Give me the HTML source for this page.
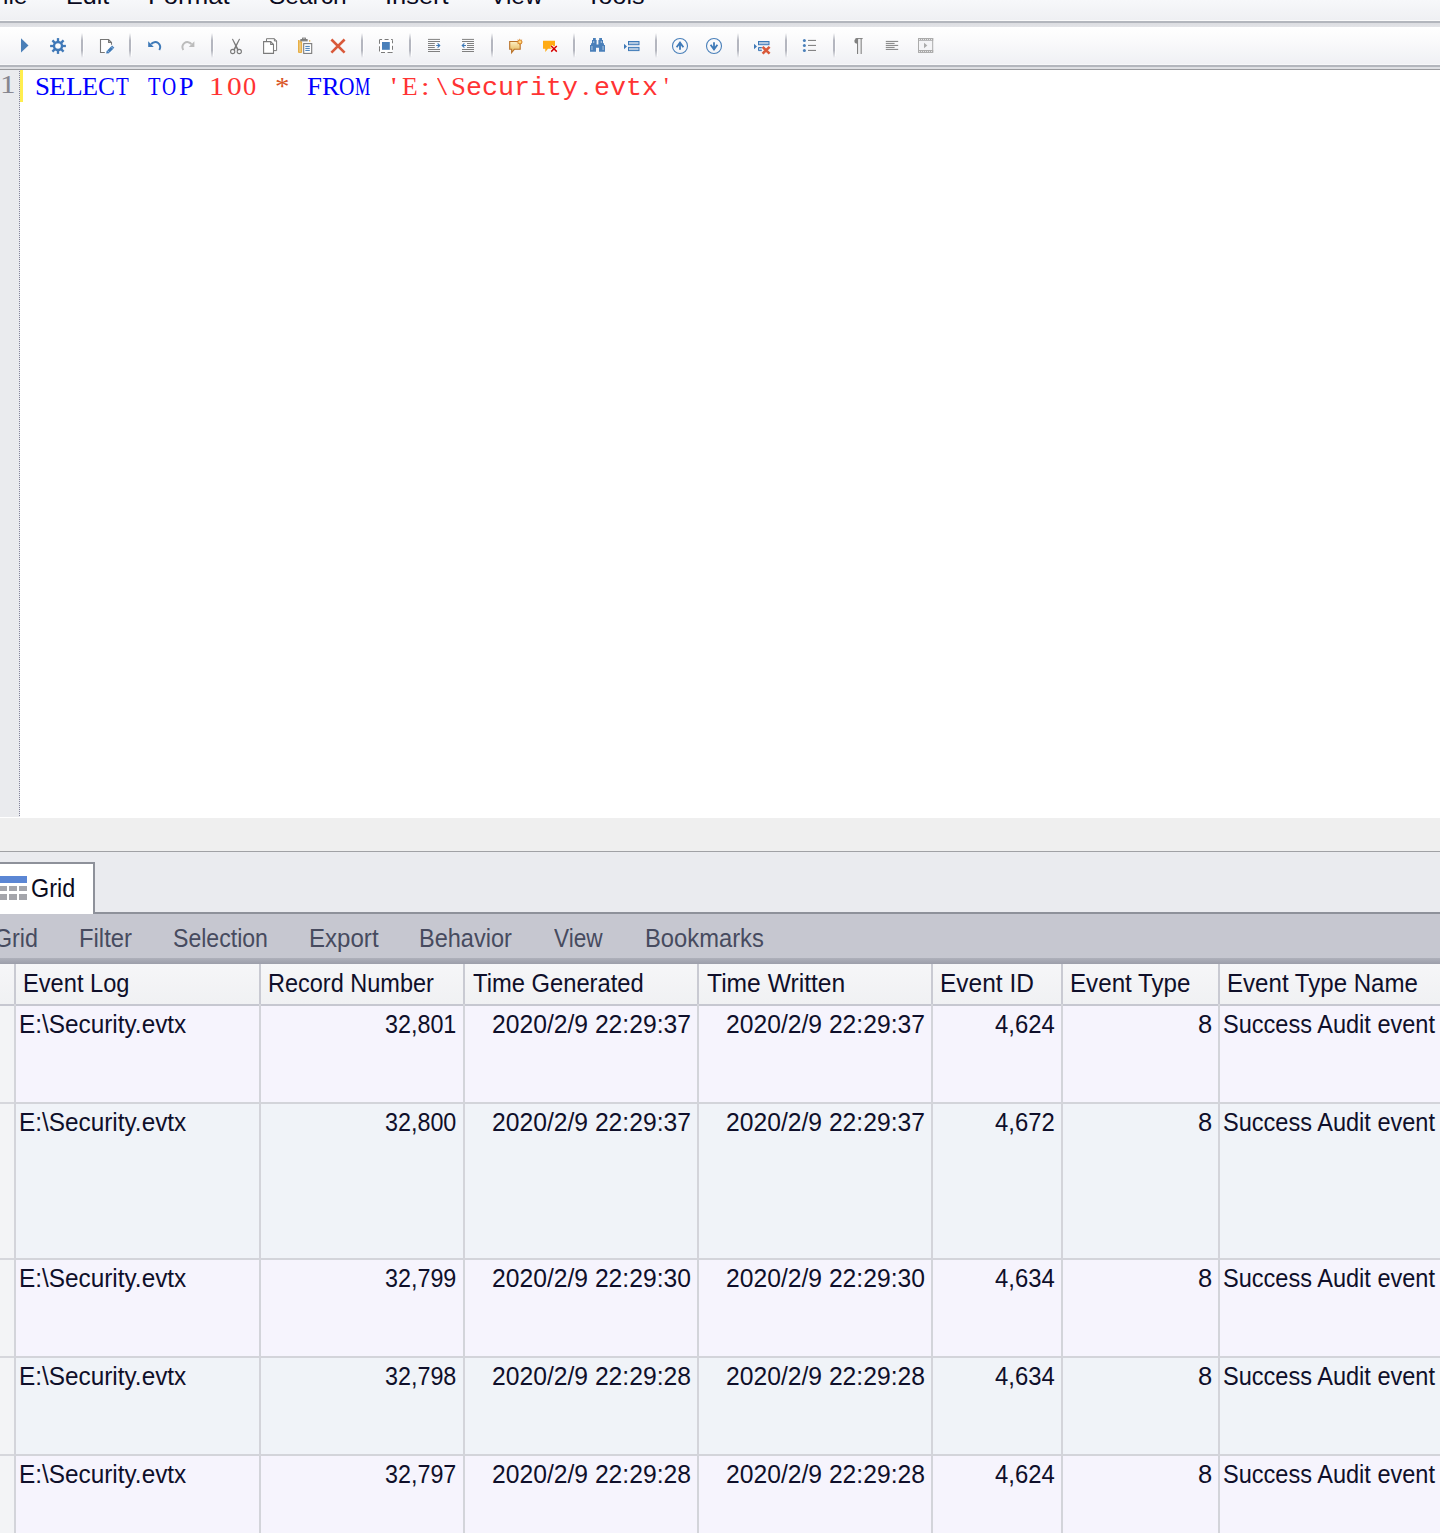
<!DOCTYPE html>
<html><head><meta charset="utf-8"><style>
*{margin:0;padding:0;box-sizing:border-box}
html,body{width:1440px;height:1533px;overflow:hidden;background:#fff}
body{position:relative;font-family:"Liberation Sans",sans-serif;color:#000}
.a{position:absolute}
.t{position:absolute;white-space:pre;line-height:1;transform-origin:0 0;font-size:24.5px}
.mi{color:#0a0a1e}
.code{font-family:"Liberation Mono",monospace;font-size:26.6667px}
.cs{font-family:"Liberation Serif",serif;font-size:24.5px}
.hd{color:#0f0f2a}
.cell{color:#0f0f2a}
.gm{color:#474b5f;font-size:24px}
.vl{position:absolute;width:2px}
.hl{position:absolute;left:16px;width:1424px;height:2px;background:#d3d4da}
</style></head><body>
<div class="a" style="left:0;top:0;width:1440px;height:20px;background:linear-gradient(#f7f8fa,#eff0f3)"></div>
<div class="a" style="left:0;top:20px;width:1440px;height:1px;background:#fafafb"></div>
<div class="a" style="left:0;top:21px;width:1440px;height:2px;background:#b3b6bd"></div>
<div class="a" style="left:0;top:23px;width:1440px;height:4px;background:linear-gradient(#dcdde1,#e3e4e8)"></div>
<span class="t mi" style="left:-12.00px;top:-16.5px;transform:scale(1.0,1.0);">File</span>
<span class="t mi" style="left:65.95px;top:-16.5px;transform:scale(1.025,1.0);">Edit</span>
<span class="t mi" style="left:147.89px;top:-16.5px;transform:scale(1.053,1.0);">Format</span>
<span class="t mi" style="left:269.00px;top:-16.5px;transform:scale(1.0,1.0);">Search</span>
<span class="t mi" style="left:384.62px;top:-16.5px;transform:scale(1.039,1.0);">Insert</span>
<span class="t mi" style="left:490.00px;top:-16.5px;transform:scale(1.0,1.0);">View</span>
<span class="t mi" style="left:585.68px;top:-16.5px;transform:scale(1.024,1.0);">Tools</span>
<div class="a" style="left:0;top:27px;width:1440px;height:38px;background:linear-gradient(#ffffff,#fbfbfc 30%,#eff0f4)"></div>
<div class="a" style="left:0;top:64px;width:1440px;height:1px;background:#f7f7f9"></div>
<div class="a" style="left:0;top:65px;width:1440px;height:2px;background:#b3b6bd"></div>
<div class="a" style="left:0;top:67px;width:1440px;height:2px;background:#dedfe3"></div>
<div class="a" style="left:0;top:69px;width:1440px;height:1px;background:#9a9b9f"></div>
<svg class="a" style="left:0;top:0" width="960" height="70">
<!-- separators -->
<defs><linearGradient id="sg" x1="0" y1="0" x2="0" y2="1"><stop offset="0" stop-color="#b4b6bf" stop-opacity="0"/><stop offset=".3" stop-color="#b4b6bf"/><stop offset=".7" stop-color="#b4b6bf"/><stop offset="1" stop-color="#b4b6bf" stop-opacity="0"/></linearGradient></defs>
<rect x="81" y="33" width="2" height="25" fill="url(#sg)"/><rect x="83" y="35" width="1" height="21" fill="#fff" opacity=".7"/>
<rect x="129" y="33" width="2" height="25" fill="url(#sg)"/><rect x="131" y="35" width="1" height="21" fill="#fff" opacity=".7"/>
<rect x="211" y="33" width="2" height="25" fill="url(#sg)"/><rect x="213" y="35" width="1" height="21" fill="#fff" opacity=".7"/>
<rect x="361" y="33" width="2" height="25" fill="url(#sg)"/><rect x="363" y="35" width="1" height="21" fill="#fff" opacity=".7"/>
<rect x="409" y="33" width="2" height="25" fill="url(#sg)"/><rect x="411" y="35" width="1" height="21" fill="#fff" opacity=".7"/>
<rect x="491" y="33" width="2" height="25" fill="url(#sg)"/><rect x="493" y="35" width="1" height="21" fill="#fff" opacity=".7"/>
<rect x="573" y="33" width="2" height="25" fill="url(#sg)"/><rect x="575" y="35" width="1" height="21" fill="#fff" opacity=".7"/>
<rect x="655" y="33" width="2" height="25" fill="url(#sg)"/><rect x="657" y="35" width="1" height="21" fill="#fff" opacity=".7"/>
<rect x="737" y="33" width="2" height="25" fill="url(#sg)"/><rect x="739" y="35" width="1" height="21" fill="#fff" opacity=".7"/>
<rect x="785" y="33" width="2" height="25" fill="url(#sg)"/><rect x="787" y="35" width="1" height="21" fill="#fff" opacity=".7"/>
<rect x="833" y="33" width="2" height="25" fill="url(#sg)"/><rect x="835" y="35" width="1" height="21" fill="#fff" opacity=".7"/>
<!-- play -->
<path d="M21 38.3 L21 52.5 L28.5 45.4 Z" fill="#4a7fb8"/>
<!-- gear -->
<g transform="translate(58 46)" fill="#4079b8">
<circle r="5.2"/>
<rect x="-1.15" y="-7.9" width="2.3" height="15.8"/>
<rect x="-1.15" y="-7.9" width="2.3" height="15.8" transform="rotate(45)"/>
<rect x="-1.15" y="-7.9" width="2.3" height="15.8" transform="rotate(90)"/>
<rect x="-1.15" y="-7.9" width="2.3" height="15.8" transform="rotate(135)"/>
<circle r="2.8" fill="#fbfbfd"/>
</g>
<!-- doc + pencil -->
<path d="M100.5 39.5 H108.6 L111.5 42.4 V52.5 H100.5 Z" fill="#fff"/>
<path d="M104.8 52.5 H100.5 V39.5 H108.6 L111.5 42.4 V44.8 M108.6 39.5 V42.4 H111.5" fill="none" stroke="#767676" stroke-width="1.1"/>
<path d="M106.2 53.6 L106.63 50.91 L112.07 45.47 L114.33 47.73 L108.89 53.17 Z" fill="#3f7ab8"/>
<path d="M107.19 50.35 L109.45 52.61 M111.01 46.53 L113.27 48.79" stroke="#fff" stroke-width="0.7" opacity=".75"/>
<!-- undo -->
<path d="M148.2 41.2 L148.2 46.9 L153.8 46.9 Z" fill="#3f7ab8"/>
<path d="M151.2 44.2 A4.6 4.6 0 1 1 159.3 50" fill="none" stroke="#3f7ab8" stroke-width="2"/>
<!-- redo -->
<g transform="translate(342.6 0) scale(-1 1)">
<path d="M148.2 41.2 L148.2 46.9 L153.8 46.9 Z" fill="#bcbcbc"/>
<path d="M151.2 44.2 A4.6 4.6 0 1 1 159.3 50" fill="none" stroke="#bcbcbc" stroke-width="2"/>
</g>
<!-- scissors -->
<g fill="#7a7a7a">
<path d="M231.9 38.9 L232.9 38.8 L238.9 49.8 L237.3 50.4 Z"/>
<path d="M240.1 38.9 L239.1 38.8 L233.1 49.8 L234.7 50.4 Z"/>
</g>
<g fill="none" stroke="#7a7a7a" stroke-width="1.1">
<circle cx="232.7" cy="51.5" r="2.1"/>
<circle cx="239.3" cy="51.5" r="2.1"/>
</g>
<!-- copy -->
<path d="M266.5 38.7 H274.4 L276.6 41 V50.6 H266.5 Z" fill="#fff" stroke="#7b7b7b" stroke-width="1"/>
<path d="M274.4 38.7 V41 H276.6" fill="none" stroke="#7b7b7b" stroke-width="1"/>
<path d="M263.6 41.6 H270.7 L273.5 44.4 V53.4 H263.6 Z" fill="#fff" stroke="#7b7b7b" stroke-width="1.1"/>
<path d="M270.7 41.6 V44.4 H273.5" fill="none" stroke="#7b7b7b" stroke-width="1.1"/>
<!-- paste -->
<rect x="298.4" y="40.2" width="3.3" height="12.3" fill="#ebc77c"/>
<path d="M298.6 40 V52.4 H301.6 V42 H299.6" fill="none" stroke="#e7a93a" stroke-width="1"/>
<rect x="309.2" y="40" width="1" height="1.8" fill="#e7a93a"/>
<rect x="300.9" y="39.6" width="6.2" height="1.2" fill="none" stroke="#7a7a7a" stroke-width="1.1"/><rect x="302.6" y="38.1" width="2.8" height="1.6" fill="none" stroke="#7a7a7a" stroke-width="1"/>
<rect x="303.7" y="43.6" width="8" height="9.8" fill="#fff" stroke="#7b7b7b" stroke-width="1.1"/>
<g stroke="#3f7ab8" stroke-width="1"><path d="M305.3 46.4 H309.8 M305.3 48.4 H309.8 M305.3 50.4 H309.8"/></g>
<!-- big X -->
<path d="M331.4 39.5 L344.6 52.6 M344.6 39.5 L331.4 52.6" stroke="#d9593a" stroke-width="2.6"/>
<!-- select all -->
<rect x="379.5" y="39.5" width="13" height="13" fill="#fff" stroke="#7a7a7a" stroke-width="1" stroke-dasharray="2.6 2.5 4 2.5 2.6 0" />
<rect x="382" y="42" width="7.8" height="7.8" fill="#4a80ba"/>
<!-- indent -->
<g stroke="#808080" stroke-width="1">
<path d="M428 39.4 H440 M428 41.5 H440 M428 43.5 H434.8 M428 45.5 H434.8 M428 47.5 H434.8 M428 49.5 H440 M428 51.5 H440"/>
<path d="M462 39.4 H474 M462 41.5 H474 M467 43.5 H474 M467 45.5 H474 M467 47.5 H474 M462 49.5 H474 M462 51.5 H474"/>
</g>
<g stroke="#3f7ab8" stroke-width="1.1" fill="none">
<path d="M436.2 45.5 H439.6 M437.6 43.3 L439.8 45.5 L437.6 47.7"/>
<path d="M466 45.5 H462.4 M464.4 43.3 L462.2 45.5 L464.4 47.7"/>
</g>
<!-- comment new -->
<defs><linearGradient id="cg" x1="0" y1="0" x2="0" y2="1"><stop offset="0" stop-color="#fdf0c4"/><stop offset="1" stop-color="#e2b04e"/></linearGradient></defs>
<path d="M509.7 41.5 H520.2 V49.3 H514.3 L511.6 52.6 V49.3 H509.7 Z" fill="url(#cg)" stroke="#b9722a" stroke-width="1.1"/>
<g transform="translate(519.8 41.9)"><path d="M0.00 -3.40 L0.77 -1.85 L2.40 -2.40 L1.85 -0.77 L3.40 0.00 L1.85 0.77 L2.40 2.40 L0.77 1.85 L0.00 3.40 L-0.77 1.85 L-2.40 2.40 L-1.85 0.77 L-3.40 0.00 L-1.85 -0.77 L-2.40 -2.40 L-0.77 -1.85 Z" fill="#d9852a"/><rect x="-1.3" y="-1.3" width="2.6" height="2.6" fill="#ffd77a"/></g>
<!-- uncomment -->
<path d="M543 40.8 H555 V48.8 H548 L545.3 52 V48.8 H543 Z" fill="#ffab14"/>
<path d="M551.2 46 L556.8 51.6 M556.8 46 L551.2 51.6" stroke="#fff" stroke-width="3"/>
<path d="M551.2 46 L556.8 51.6 M556.8 46 L551.2 51.6" stroke="#d40000" stroke-width="1.5"/>
<!-- binoculars -->
<path d="M590 45 V51.8 H596 V47.8 H599 V51.8 H605 V45 H604 V43.3 H603 V40 H602 V38 H599.2 V40 H598.4 V44.4 H596.6 V40 H595.8 V38 H593 V40 H592 V43.3 H591 V45 Z" fill="#4a80ba"/>
<g fill="#b8cde4"><rect x="591.5" y="46" width="0.9" height="4"/><rect x="602.6" y="46" width="0.9" height="4"/><rect x="593.3" y="41" width="0.9" height="2"/><rect x="600.8" y="41" width="0.9" height="2"/></g>
<!-- goto -->
<path d="M624 43.7 V49.3 L627 46.5 Z" fill="#3f7ab8"/>
<rect x="628.5" y="41.5" width="10.5" height="3.2" fill="#b2c8e0" stroke="#3f7ab8" stroke-width="1"/>
<rect x="628.5" y="47.4" width="10.5" height="3.2" fill="#b2c8e0" stroke="#3f7ab8" stroke-width="1"/>
<!-- up / down circles -->
<circle cx="680" cy="46" r="7.5" fill="none" stroke="#4a80ba" stroke-width="1.1"/>
<path d="M680 42 V49.8 M676.6 47.2 L680 42.6 L683.4 47.2" fill="none" stroke="#3f7ab8" stroke-width="1.8"/>
<circle cx="714" cy="46" r="7.5" fill="none" stroke="#4a80ba" stroke-width="1.1"/>
<path d="M714 42.2 V50 M710.6 44.8 L714 49.4 L717.4 44.8" fill="none" stroke="#3f7ab8" stroke-width="1.8"/>
<!-- clear bookmarks -->
<path d="M754 43.7 V49.3 L757 46.5 Z" fill="#3f7ab8"/>
<rect x="758.5" y="41.5" width="10.5" height="3.2" fill="#b2c8e0" stroke="#3f7ab8" stroke-width="1"/>
<path d="M761.8 47.5 H758.5 V50.6 H761.8" fill="#b2c8e0" stroke="#3f7ab8" stroke-width="1"/>
<path d="M762.6 46.9 L769.6 53.6 M769.6 46.9 L762.6 53.6" stroke="#d9593a" stroke-width="2.6"/>
<!-- bullets -->
<g fill="#4a80ba"><circle cx="804.4" cy="40.4" r="1.5"/><circle cx="804.4" cy="45.4" r="1.5"/><circle cx="804.4" cy="50.4" r="1.5"/></g>
<path d="M808 40.4 H816 M808 45.4 H816 M808 50.4 H816" stroke="#777" stroke-width="1"/>
<!-- pilcrow -->
<path d="M857.4 38.4 A3 2.7 0 0 0 857.4 43.8 Z" fill="#808080"/>
<path d="M855.5 38.6 H862.7" stroke="#808080" stroke-width="1"/>
<rect x="857" y="38.4" width="1.3" height="15.6" fill="#808080"/>
<rect x="860.4" y="38.4" width="1.3" height="15.6" fill="#808080"/>
<rect x="858.3" y="39.2" width="2.1" height="14.8" fill="#efeff1"/>
<!-- align -->
<path d="M885.8 41.4 H898.2 M885.8 43.4 H894.6 M885.8 45.4 H898.2 M885.8 47.4 H894.6 M885.8 49.4 H898.2" stroke="#808080" stroke-width="1"/>
<!-- film -->
<rect x="918.5" y="38.5" width="14.2" height="13.8" fill="#f4f4f6" stroke="#ababab" stroke-width="1"/>
<rect x="918" y="38" width="15.2" height="2.8" fill="#ababab"/>
<rect x="918" y="50" width="15.2" height="2.8" fill="#ababab"/>
<g fill="#f4f4f6">
<rect x="919.1" y="39" width="0.9" height="0.9"/><rect x="921.1" y="39" width="0.9" height="0.9"/><rect x="923.1" y="39" width="0.9" height="0.9"/><rect x="925.1" y="39" width="0.9" height="0.9"/><rect x="927.1" y="39" width="0.9" height="0.9"/><rect x="929.1" y="39" width="0.9" height="0.9"/><rect x="931.1" y="39" width="0.9" height="0.9"/>
<rect x="919.1" y="51" width="0.9" height="0.9"/><rect x="921.1" y="51" width="0.9" height="0.9"/><rect x="923.1" y="51" width="0.9" height="0.9"/><rect x="925.1" y="51" width="0.9" height="0.9"/><rect x="927.1" y="51" width="0.9" height="0.9"/><rect x="929.1" y="51" width="0.9" height="0.9"/><rect x="931.1" y="51" width="0.9" height="0.9"/>
</g>
<path d="M924 42.7 V48.3 L927.3 45.5 Z" fill="#ababab"/>
</svg>

<div class="a" style="left:0;top:70px;width:19px;height:747px;background:#eaebee"></div>
<div class="a" style="left:19px;top:70px;width:1px;height:747px;background:repeating-linear-gradient(#e6e7f2 0 1px,#858696 1px 2px)"></div>
<div class="a" style="left:20px;top:70px;width:3px;height:32px;background:#ffee4e"></div>
<span class="t cs" style="left:0.3px;top:72px;transform:scale(1.27,1.05);color:#86868f">1</span>
<span class="t cs" style="left:34.70px;top:75px;transform:scaleX(1.1);color:#0000ff">S</span>
<span class="t cs" style="left:48.88px;top:75px;transform:scaleX(1.123);color:#0000ff">E</span>
<span class="t cs" style="left:65.58px;top:75px;transform:scaleX(1.119);color:#0000ff">L</span>
<span class="t cs" style="left:82.23px;top:75px;transform:scaleX(1.069);color:#0000ff">E</span>
<span class="t cs" style="left:98.26px;top:75px;transform:scaleX(1.043);color:#0000ff">C</span>
<span class="t cs" style="left:115.80px;top:75px;transform:scaleX(0.853);color:#0000ff">T</span>
<span class="t cs" style="left:147.50px;top:75px;transform:scaleX(0.833);color:#0000ff">T</span>
<span class="t cs" style="left:162.40px;top:75px;transform:scaleX(0.8);color:#0000ff">O</span>
<span class="t cs" style="left:178.93px;top:75px;transform:scaleX(1.067);color:#0000ff">P</span>
<span class="t cs" style="left:209.33px;top:75px;transform:scaleX(1.233);color:#ff3333">1</span>
<span class="t cs" style="left:227.30px;top:75px;transform:scaleX(1.2);color:#ff3333">0</span>
<span class="t cs" style="left:243.32px;top:75px;transform:scaleX(1.077);color:#ff3333">0</span>
<span class="t cs" style="left:274.52px;top:75px;transform:scaleX(1.18);color:#d9531e">*</span>
<span class="t cs" style="left:306.50px;top:75px;transform:scaleX(1.1);color:#0000ff">F</span>
<span class="t cs" style="left:321.93px;top:75px;transform:scaleX(1.067);color:#0000ff">R</span>
<span class="t cs" style="left:339.12px;top:75px;transform:scaleX(0.875);color:#0000ff">O</span>
<span class="t cs" style="left:355.30px;top:75px;transform:scaleX(0.7);color:#0000ff">M</span>
<span class="t cs" style="left:390.82px;top:75px;transform:scaleX(1.25);color:#ff3333">'</span>
<span class="t cs" style="left:401.85px;top:75px;transform:scaleX(1.046);color:#ff3333">E</span>
<span class="t cs" style="left:420.85px;top:75px;transform:scaleX(1.25);color:#ff3333">:</span>
<span class="t cs" style="left:436.80px;top:75px;transform:scaleX(1.486);color:#ff3333">\</span>
<span class="t cs" style="left:450.81px;top:75px;transform:scaleX(1.091);color:#ff3333">S</span>
<span class="t code" style="left:466px;top:75px;color:#ff3333">e</span>
<span class="t code" style="left:482px;top:75px;color:#ff3333">c</span>
<span class="t code" style="left:498px;top:75px;color:#ff3333">u</span>
<span class="t code" style="left:514px;top:75px;color:#ff3333">r</span>
<span class="t code" style="left:530px;top:75px;color:#ff3333">i</span>
<span class="t code" style="left:546px;top:75px;color:#ff3333">t</span>
<span class="t code" style="left:562px;top:75px;color:#ff3333">y</span>
<span class="t cs" style="left:581.89px;top:75px;transform:scaleX(1.25);color:#ff3333">.</span>
<span class="t code" style="left:594px;top:75px;color:#ff3333">e</span>
<span class="t code" style="left:610px;top:75px;color:#ff3333">v</span>
<span class="t code" style="left:626px;top:75px;color:#ff3333">t</span>
<span class="t code" style="left:642px;top:75px;color:#ff3333">x</span>
<span class="t cs" style="left:663.87px;top:75px;transform:scaleX(1.033);color:#ff3333">'</span>
<div class="a" style="left:0;top:818px;width:1440px;height:33px;background:#efefef"></div>
<div class="a" style="left:0;top:851px;width:1440px;height:1px;background:#a0a1a5"></div>
<div class="a" style="left:0;top:852px;width:1440px;height:62px;background:#eaebef"></div>
<div class="a" style="left:93px;top:912px;width:1347px;height:2px;background:#8e919a"></div>
<div class="a" style="left:0;top:862px;width:95px;height:52px;background:#8e919a"></div>
<div class="a" style="left:0;top:864px;width:93px;height:50px;background:#fff"></div>
<div class="a" style="left:0;top:876px;width:27px;height:7px;background:#5b86d4"></div>
<div class="a" style="left:0px;top:886px;width:7px;height:5px;background:#a4a5ab"></div>
<div class="a" style="left:0px;top:894px;width:7px;height:6px;background:#a4a5ab"></div>
<div class="a" style="left:9px;top:886px;width:8px;height:5px;background:#a4a5ab"></div>
<div class="a" style="left:9px;top:894px;width:8px;height:6px;background:#a4a5ab"></div>
<div class="a" style="left:19px;top:886px;width:8px;height:5px;background:#a4a5ab"></div>
<div class="a" style="left:19px;top:894px;width:8px;height:6px;background:#a4a5ab"></div>
<span class="t " style="left:31.05px;top:875.8px;transform:scale(0.9545,1.06);color:#0a0a20">Grid</span>
<div class="a" style="left:0;top:914px;width:1440px;height:44px;background:#c6c7d0"></div>
<div class="a" style="left:0;top:958px;width:1440px;height:6px;background:linear-gradient(#aeb0ba,#9c9eaa)"></div>
<span class="t gm" style="left:-6.30px;top:926.0px;transform:scale(0.97,1.06);">Grid</span>
<span class="t gm" style="left:78.61px;top:926.0px;transform:scale(0.993,1.06);">Filter</span>
<span class="t gm" style="left:173.44px;top:926.0px;transform:scale(0.9615,1.06);">Selection</span>
<span class="t gm" style="left:308.59px;top:926.0px;transform:scale(1.003,1.06);">Export</span>
<span class="t gm" style="left:418.84px;top:926.0px;transform:scale(0.9804,1.06);">Behavior</span>
<span class="t gm" style="left:554.00px;top:926.0px;transform:scale(0.9423,1.06);">View</span>
<span class="t gm" style="left:644.72px;top:926.0px;transform:scale(0.9897,1.06);">Bookmarks</span>
<div class="a" style="left:0;top:964px;width:1440px;height:40px;background:linear-gradient(#f6f6f8,#f0f1f3)"></div>
<div class="a" style="left:0;top:1004px;width:1440px;height:2px;background:#c6c7d0"></div>
<span class="t hd" style="left:23.10px;top:971.2px;transform:scale(0.965,1.06);">Event Log</span>
<span class="t hd" style="left:268.08px;top:971.2px;transform:scale(0.9591,1.06);">Record Number</span>
<span class="t hd" style="left:473.03px;top:971.2px;transform:scale(0.9695,1.06);">Time Generated</span>
<span class="t hd" style="left:707.29px;top:971.2px;transform:scale(1.0052,1.06);">Time Written</span>
<span class="t hd" style="left:939.70px;top:971.2px;transform:scale(0.9989,1.06);">Event ID</span>
<span class="t hd" style="left:1069.63px;top:971.2px;transform:scale(0.9866,1.06);">Event Type</span>
<span class="t hd" style="left:1226.73px;top:971.2px;transform:scale(0.9827,1.06);">Event Type Name</span>
<div class="a" style="left:16px;top:1006px;width:1424px;height:96px;background:#f6f4fd"></div>
<div class="a" style="left:0;top:1006px;width:14px;height:98px;background:#f3f4f6"></div>
<div class="hl" style="top:1102px"></div>
<div class="a" style="left:0;top:1102px;width:14px;height:2px;background:#d6d7dc"></div>
<span class="t cell" style="left:19.21px;top:1011.5px;transform:scale(0.9934,1.06);">E:\Security.evtx</span>
<span class="t cell" style="left:384.85px;top:1011.5px;transform:scale(0.9521,1.06);">32,801</span>
<span class="t cell" style="left:492.29px;top:1011.5px;transform:scale(1.0071,1.06);">2020/2/9 22:29:37</span>
<span class="t cell" style="left:726.29px;top:1011.5px;transform:scale(1.0071,1.06);">2020/2/9 22:29:37</span>
<span class="t cell" style="left:994.83px;top:1011.5px;transform:scale(0.9733,1.06);">4,624</span>
<span class="t cell" style="left:1198.16px;top:1011.5px;transform:scale(1.0417,1.06);">8</span>
<span class="t cell" style="left:1223.04px;top:1011.5px;transform:scale(0.9607,1.06);">Success Audit event</span>
<div class="a" style="left:16px;top:1104px;width:1424px;height:154px;background:#f0f3f8"></div>
<div class="a" style="left:0;top:1104px;width:14px;height:156px;background:#f3f4f6"></div>
<div class="hl" style="top:1258px"></div>
<div class="a" style="left:0;top:1258px;width:14px;height:2px;background:#d6d7dc"></div>
<span class="t cell" style="left:19.21px;top:1109.5px;transform:scale(0.9934,1.06);">E:\Security.evtx</span>
<span class="t cell" style="left:384.85px;top:1109.5px;transform:scale(0.9521,1.06);">32,800</span>
<span class="t cell" style="left:492.29px;top:1109.5px;transform:scale(1.0071,1.06);">2020/2/9 22:29:37</span>
<span class="t cell" style="left:726.29px;top:1109.5px;transform:scale(1.0071,1.06);">2020/2/9 22:29:37</span>
<span class="t cell" style="left:994.83px;top:1109.5px;transform:scale(0.9733,1.06);">4,672</span>
<span class="t cell" style="left:1198.16px;top:1109.5px;transform:scale(1.0417,1.06);">8</span>
<span class="t cell" style="left:1223.04px;top:1109.5px;transform:scale(0.9607,1.06);">Success Audit event</span>
<div class="a" style="left:16px;top:1260px;width:1424px;height:96px;background:#f6f4fd"></div>
<div class="a" style="left:0;top:1260px;width:14px;height:98px;background:#f3f4f6"></div>
<div class="hl" style="top:1356px"></div>
<div class="a" style="left:0;top:1356px;width:14px;height:2px;background:#d6d7dc"></div>
<span class="t cell" style="left:19.21px;top:1265.5px;transform:scale(0.9934,1.06);">E:\Security.evtx</span>
<span class="t cell" style="left:384.85px;top:1265.5px;transform:scale(0.9521,1.06);">32,799</span>
<span class="t cell" style="left:492.29px;top:1265.5px;transform:scale(1.0071,1.06);">2020/2/9 22:29:30</span>
<span class="t cell" style="left:726.29px;top:1265.5px;transform:scale(1.0071,1.06);">2020/2/9 22:29:30</span>
<span class="t cell" style="left:994.83px;top:1265.5px;transform:scale(0.9733,1.06);">4,634</span>
<span class="t cell" style="left:1198.16px;top:1265.5px;transform:scale(1.0417,1.06);">8</span>
<span class="t cell" style="left:1223.04px;top:1265.5px;transform:scale(0.9607,1.06);">Success Audit event</span>
<div class="a" style="left:16px;top:1358px;width:1424px;height:96px;background:#f0f3f8"></div>
<div class="a" style="left:0;top:1358px;width:14px;height:98px;background:#f3f4f6"></div>
<div class="hl" style="top:1454px"></div>
<div class="a" style="left:0;top:1454px;width:14px;height:2px;background:#d6d7dc"></div>
<span class="t cell" style="left:19.21px;top:1363.5px;transform:scale(0.9934,1.06);">E:\Security.evtx</span>
<span class="t cell" style="left:384.85px;top:1363.5px;transform:scale(0.9521,1.06);">32,798</span>
<span class="t cell" style="left:492.29px;top:1363.5px;transform:scale(1.0071,1.06);">2020/2/9 22:29:28</span>
<span class="t cell" style="left:726.29px;top:1363.5px;transform:scale(1.0071,1.06);">2020/2/9 22:29:28</span>
<span class="t cell" style="left:994.83px;top:1363.5px;transform:scale(0.9733,1.06);">4,634</span>
<span class="t cell" style="left:1198.16px;top:1363.5px;transform:scale(1.0417,1.06);">8</span>
<span class="t cell" style="left:1223.04px;top:1363.5px;transform:scale(0.9607,1.06);">Success Audit event</span>
<div class="a" style="left:16px;top:1456px;width:1424px;height:96px;background:#f6f4fd"></div>
<div class="a" style="left:0;top:1456px;width:14px;height:98px;background:#f3f4f6"></div>
<div class="hl" style="top:1552px"></div>
<div class="a" style="left:0;top:1552px;width:14px;height:2px;background:#d6d7dc"></div>
<span class="t cell" style="left:19.21px;top:1461.5px;transform:scale(0.9934,1.06);">E:\Security.evtx</span>
<span class="t cell" style="left:384.85px;top:1461.5px;transform:scale(0.9521,1.06);">32,797</span>
<span class="t cell" style="left:492.29px;top:1461.5px;transform:scale(1.0071,1.06);">2020/2/9 22:29:28</span>
<span class="t cell" style="left:726.29px;top:1461.5px;transform:scale(1.0071,1.06);">2020/2/9 22:29:28</span>
<span class="t cell" style="left:994.83px;top:1461.5px;transform:scale(0.9733,1.06);">4,624</span>
<span class="t cell" style="left:1198.16px;top:1461.5px;transform:scale(1.0417,1.06);">8</span>
<span class="t cell" style="left:1223.04px;top:1461.5px;transform:scale(0.9607,1.06);">Success Audit event</span>
<div class="vl" style="left:14px;top:964px;height:40px;background:#c9cad2"></div>
<div class="vl" style="left:14px;top:1004px;height:529px;background:#d3d4da"></div>
<div class="vl" style="left:259px;top:964px;height:40px;background:#c9cad2"></div>
<div class="vl" style="left:259px;top:1004px;height:529px;background:#d3d4da"></div>
<div class="vl" style="left:463px;top:964px;height:40px;background:#c9cad2"></div>
<div class="vl" style="left:463px;top:1004px;height:529px;background:#d3d4da"></div>
<div class="vl" style="left:697px;top:964px;height:40px;background:#c9cad2"></div>
<div class="vl" style="left:697px;top:1004px;height:529px;background:#d3d4da"></div>
<div class="vl" style="left:931px;top:964px;height:40px;background:#c9cad2"></div>
<div class="vl" style="left:931px;top:1004px;height:529px;background:#d3d4da"></div>
<div class="vl" style="left:1061px;top:964px;height:40px;background:#c9cad2"></div>
<div class="vl" style="left:1061px;top:1004px;height:529px;background:#d3d4da"></div>
<div class="vl" style="left:1218px;top:964px;height:40px;background:#c9cad2"></div>
<div class="vl" style="left:1218px;top:1004px;height:529px;background:#d3d4da"></div>
</body></html>
